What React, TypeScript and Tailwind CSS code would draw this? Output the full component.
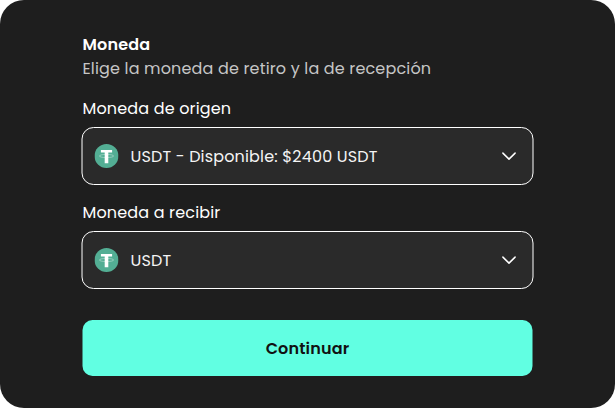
function TetherIcon() {
  return (
    <svg className="size-6 shrink-0" viewBox="0 0 24 24" fill="none" aria-hidden="true">
      <circle cx="12" cy="12" r="12" fill="#53ae94" />
      <ellipse cx="12" cy="12" rx="7.2" ry="1.6" stroke="#fff" strokeOpacity="0.6" strokeWidth="0.6" />
      <path d="M6.4 5.9h11.2v2.7h-3.8v10.7h-3.6V8.6H6.4z" fill="#fff" />
    </svg>
  );
}

function ChevronIcon() {
  return (
    <svg className="size-6 shrink-0" viewBox="0 0 24 24" fill="none" stroke="#fff" strokeWidth="1.5" strokeLinecap="round" strokeLinejoin="round" aria-hidden="true">
      <path d="M6.4 9.1l6.1 6 6.1-6" />
    </svg>
  );
}

function CurrencyField({ label, value }: { label: string; value: string }) {
  return (
    <div>
      <div className="pl-px">{label}</div>
      <button
        type="button"
        className="mt-1.5 flex h-[58px] w-full items-center rounded-xl border border-white bg-[#2a2a2a] px-3 text-left tracking-[0.01em]"
      >
        <TetherIcon />
        <span className="ml-3 flex-1 pt-0.5 text-[#f4f4f4]">{value}</span>
        <ChevronIcon />
      </button>
    </div>
  );
}

export default function App() {
  return (
    <main className="h-[408px] w-[615px] rounded-3xl bg-[#1e1e1e] pt-[33px] font-[Poppins,'Open_Sans',sans-serif] text-base tracking-[0.01em] text-white">
      <div className="ml-[81px] flex w-[452px] translate-x-[0.5px] flex-col">
        <header className="pl-px">
          <h1 className="font-semibold">Moneda</h1>
          <p className="text-[#c6c6c6]">Elige la moneda de retiro y la de recepción</p>
        </header>
        <div className="mt-4 flex flex-col gap-4">
          <CurrencyField label="Moneda de origen" value="USDT - Disponible: $2400 USDT" />
          <CurrencyField label="Moneda a recibir" value="USDT" />
        </div>
        <button type="button" className="mx-px mt-[31px] h-14 rounded-[10px] bg-[#61ffe2] pt-0.5 font-semibold tracking-[0.01em] text-[#111]">
          Continuar
        </button>
      </div>
    </main>
  );
}
